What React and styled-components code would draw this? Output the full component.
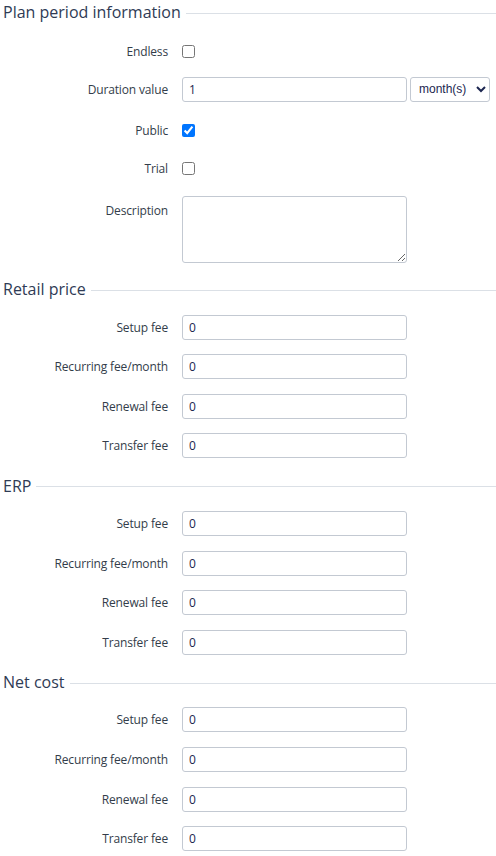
import React from "react";
import styled, { createGlobalStyle } from "styled-components";

const Global = createGlobalStyle`
  html, body { margin: 0; padding: 0; background: #fff; }
  body { font-family: "Open Sans", "Liberation Sans", sans-serif; color: #333d4a; }
  * { box-sizing: border-box; }
`;

const Page = styled.div`
  width: 496px;
  padding-left: 3px;
`;

const Section = styled.section`
  margin-bottom: 8px;
`;

const Legend = styled.div`
  display: flex;
  align-items: center;
  gap: 5px;
  height: 24px;
  margin-bottom: 6px;
  font-size: 16px;
  color: #2f3b55;
  white-space: nowrap;
  &::after {
    content: "";
    flex: 1;
    height: 1px;
    background: #dbe0e6;
    margin-top: 2px;
  }
`;

const Row = styled.div`
  display: grid;
  grid-template-columns: 165px 1fr;
  column-gap: 14px;
  align-items: ${(p) => (p.$top ? "start" : "center")};
  min-height: 39.6px;
  padding: ${(p) => (p.$top ? "8px 0 6px" : p.$check ? "3px 0 0" : "0")};
`;

const Label = styled.label`
  text-align: right;
  font-size: 12px;
  letter-spacing: -0.15px;
  color: #333d4a;
  padding-top: ${(p) => (p.$top ? "6px" : "0")};
`;

const Controls = styled.div`
  display: flex;
  align-items: center;
  gap: 3px;
`;

const TextInput = styled.input`
  width: 225px;
  height: 25px;
  border: 1px solid #c3c9d2;
  border-radius: 3px;
  padding: 0 6px;
  font-family: "Open Sans", "Liberation Sans", sans-serif;
  font-size: 12px;
  color: #1c2650;
  background: #fff;
  outline: none;
`;

const Select = styled.select`
  width: 80px;
  height: 25px;
  border: 1px solid #c3c9d2;
  border-radius: 3px;
  font-family: "Liberation Sans", Arial, sans-serif;
  font-size: 12px;
  color: #1c2650;
  background: #fff;
  padding: 0 2px 0 4px;
`;

const Check = styled.input`
  width: 13px;
  height: 13px;
  margin: 0;
`;

const TextArea = styled.textarea`
  width: 225px;
  height: 67px;
  border: 1px solid #c3c9d2;
  border-radius: 3px;
  font-family: "Open Sans", sans-serif;
  font-size: 12px;
  margin: 0;
  display: block;
`;

function FeeRows() {
  const rows = ["Setup fee", "Recurring fee/month", "Renewal fee", "Transfer fee"];
  return rows.map((r) => (
    <Row key={r}>
      <Label>{r}</Label>
      <Controls>
        <TextInput defaultValue="0" />
      </Controls>
    </Row>
  ));
}

export default function App() {
  return (
    <Page>
      <Global />
      <Section>
        <Legend>Plan period information</Legend>
        <Row $check>
          <Label>Endless</Label>
          <Controls>
            <Check type="checkbox" />
          </Controls>
        </Row>
        <Row>
          <Label>Duration value</Label>
          <Controls>
            <TextInput defaultValue="1" />
            <Select defaultValue="month">
              <option value="month">month(s)</option>
              <option value="year">year(s)</option>
            </Select>
          </Controls>
        </Row>
        <Row $check>
          <Label>Public</Label>
          <Controls>
            <Check type="checkbox" defaultChecked />
          </Controls>
        </Row>
        <Row>
          <Label>Trial</Label>
          <Controls>
            <Check type="checkbox" />
          </Controls>
        </Row>
        <Row $top>
          <Label $top>Description</Label>
          <Controls>
            <TextArea />
          </Controls>
        </Row>
      </Section>
      <Section>
        <Legend>Retail price</Legend>
        <FeeRows />
      </Section>
      <Section>
        <Legend>ERP</Legend>
        <FeeRows />
      </Section>
      <Section>
        <Legend>Net cost</Legend>
        <FeeRows />
      </Section>
    </Page>
  );
}
